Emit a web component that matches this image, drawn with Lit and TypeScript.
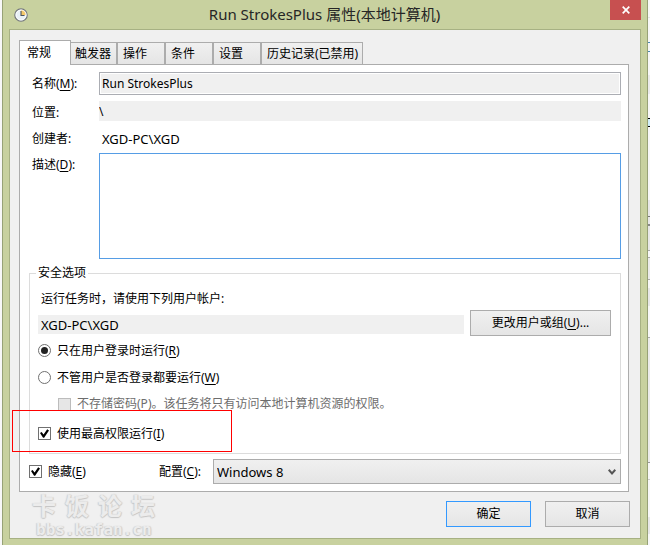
import { LitElement, html, css } from "lit";
import { customElement, state } from "lit/decorators.js";
import { classMap } from "lit/directives/class-map.js";
import { styleMap } from "lit/directives/style-map.js";

const TABS = [
  { name: "常规", size: "first" },
  { name: "触发器", size: "second" },
  { name: "操作", size: "mid" },
  { name: "条件", size: "mid" },
  { name: "设置", size: "mid" },
  { name: "历史记录(已禁用)", size: "long" },
];

// Edge of the page behind the dialog: height and colour of each band.
const BANDS: [number, string][] = [
  [17, "#f8f8f8"], [1, "#e4e4e4"], [24, "#f8f8f8"], [1, "#4a8bb0"],
  [8, "#f8f8f8"], [1, "#4a8bb0"], [23, "#f8f8f8"], [19, "#ebebeb"],
  [24, "#f8f8f8"], [1, "#000"], [7, "#d2f0fa"], [1, "#000"],
  [73, "#f8f8f8"], [16, "#e8e8e8"], [1, "#777"], [7, "#e8e8e8"],
  [2, "#888"], [24, "#e8e8e8"], [1, "#aaa"], [6, "#f8f8f8"],
  [1, "#aaa"], [21, "#ececec"], [1, "#aaa"], [8, "#f8f8f8"],
  [18, "#e8e8e8"], [31, "#f8f8f8"], [1, "#aaa"], [124, "#ececec"],
  [1, "#999"], [16, "#f8f8f8"], [1, "#ccc"], [37, "#f8f8f8"],
  [17, "#e8e8e8"],
];

@customElement("app-root")
export class AppRoot extends LitElement {
  @state() private tab = 0;

  static styles = css`
    :host {
      display: flex;
      min-height: 100vh;
      overflow: hidden;
      box-sizing: border-box;
      background: #f8f8f8;
      color: #000;
      font: 12px/16px "Noto Sans", "Noto Sans CJK SC", sans-serif;
    }
    *, *::before { box-sizing: border-box; }
    button, input, select, textarea { font: inherit; color: inherit; margin: 0; }
    u { text-decoration: underline; text-underline-offset: 2px; }
    .window {
      flex: 1;
      min-width: 0;
      margin: 0 0 0 2px;
      background: #c8d19f;
      border: solid #97a276;
      border-width: 0 1px;
      padding: 0 6px;
    }
    .titlebar {
      display: grid;
      grid-template-columns: 30px 1fr 31px;
      height: 29px;
    }
    .clock { width: 14px; height: 14px; margin: 8px 0 0 5px; }
    .title {
      margin: 0;
      text-align: center;
      font-size: 15px;
      line-height: 29px;
      font-weight: 400;
      color: #262626;
      white-space: nowrap;
    }
    .close {
      height: 20px;
      padding: 0;
      border: 0;
      background: #c75050;
      display: grid;
      place-items: center;
    }
    .body {
      background: #f0f0f0;
      border: 1px solid #a7b183;
      padding: 0 11px 0 9px;
    }
    .tabs { display: flex; align-items: flex-end; height: 34px; }
    .tab {
      height: 22px;
      padding: 0 0 0 5px;
      text-align: left;
      white-space: nowrap;
      background: linear-gradient(#f0f0f0, #e5e5e5);
      border: solid #acacac;
      border-width: 1px 1px 0 1px;
    }
    .first { width: 52px; padding-left: 7px; }
    .second { width: 46px; border-left: 0; padding-left: 4px; }
    .mid { width: 48px; }
    .long { width: 102px; }
    .active { height: 25px; margin-bottom: -1px; background: #fff; }
    .panel {
      background: #fff;
      border: 1px solid #acacac;
      padding: 7px 7px 7px 9px;
    }
    .form {
      display: grid;
      grid-template-columns: 67px 1fr;
      row-gap: 6px;
      padding-left: 3px;
      line-height: 16px;
    }
    .label { padding-top: 4px; }
    .plain { padding: 4px 0 0 3px; }
    .plain, .account .flat, .select { font-size: 13px; }
    .boxed {
      width: 100%;
      height: 23px;
      padding: 0 2px;
      border: 1px solid #abadb3;
      box-shadow: inset 0 0 0 1px #fff;
      background: #f0f0f0;
      outline: 0;
      border-radius: 0;
    }
    .flat {
      width: 100%;
      height: 20px;
      padding: 0;
      border: 0;
      background: #f0f0f0;
      outline: 0;
    }
    .area {
      display: block;
      width: 100%;
      height: 106px;
      border: 1px solid #569de5;
      background: #fff;
      resize: none;
      outline: 0;
    }
    .group {
      margin: 6px 0 0;
      min-width: 0;
      border: 1px solid #dcdcdc;
      padding: 8px 9px 6px 8px;
    }
    .legend { padding: 0 2px; margin-left: -2px; }
    .hint { margin: 0; padding-left: 3px; line-height: 20px; }
    .account { display: flex; gap: 6px; align-items: flex-end; margin: 1px 0; }
    .account .flat { flex: 1; min-width: 0; height: 19px; margin-bottom: 2px; padding-left: 3px; }
    .button {
      height: 26px;
      padding: 0;
      border: 1px solid #acacac;
      background: linear-gradient(#f0f0f0, #e5e5e5);
      text-align: center;
      white-space: nowrap;
    }
    .wide { width: 141px; }
    .normal { width: 85px; }
    .default { border-color: #3399ff; }
    .option { display: flex; align-items: center; gap: 6px; height: 27px; }
    .nested { height: 26px; padding-left: 20px; color: #6d6d6d; }
    .check, .radio {
      appearance: none;
      flex: none;
      width: 13px;
      height: 13px;
      border: 1px solid #707070;
      background: #fff;
      display: grid;
      place-items: center;
    }
    .check:checked::before {
      content: "";
      width: 9px;
      height: 9px;
      background: #000;
      clip-path: polygon(0 45%, 18% 34%, 40% 60%, 80% 4%, 100% 16%, 46% 98%, 34% 98%);
    }
    .check:disabled { border-color: #bcbcbc; background: #e6e6e6; }
    .radio { border-radius: 50%; }
    .radio:checked::before {
      content: "";
      width: 7px;
      height: 7px;
      border-radius: 50%;
      background: #222;
    }
    .marked { position: relative; margin-top: 3px; }
    .mark {
      position: absolute;
      left: -26px;
      top: -10px;
      width: 220px;
      bottom: -5px;
      border: 1px solid #f00;
      pointer-events: none;
    }
    .bottom {
      display: grid;
      grid-template-columns: 130px 54px 1fr;
      align-items: center;
      margin-top: 5px;
    }
    .bottom .option { height: 25px; }
    .picker { display: grid; align-items: center; }
    .select {
      grid-area: 1 / 1;
      appearance: none;
      width: 100%;
      height: 25px;
      padding: 0 20px 0 3px;
      border: 1px solid #acacac;
      border-radius: 0;
      background: linear-gradient(#f0f0f0, #e5e5e5);
    }
    .chevron { grid-area: 1 / 1; justify-self: end; margin-right: 5px; pointer-events: none; }
    .footer {
      display: flex;
      gap: 14px;
      align-items: flex-start;
      height: 46px;
      padding-top: 9px;
      margin-right: -1px;
    }
    .watermark {
      margin: -8px auto 0 13px;
      color: #ececec;
      text-shadow: 0 1px 1px #c4c4c4, 1px 0 1px #cecece, -1px 0 1px #d4d4d4;
    }
    .forum {
      display: flex;
      gap: 9px;
      font: 700 24px/28px "Liberation Sans", "Noto Sans CJK SC", sans-serif;
    }
    .site { display: block; padding-left: 4px; font: 700 16px/18px "DejaVu Sans Mono", monospace; }
    .behind { flex: none; width: 2px; }
  `;

  render() {
    return html`
      <main class="window">
        <header class="titlebar">
          <svg class="clock" viewBox="0 0 14 14" aria-hidden="true">
            <circle cx="7" cy="7" r="6.2" fill="#e8f0f6" stroke="#74787c" stroke-width="1.2" />
            <path d="M7 7V1.8A5.2 5.2 0 0 1 12.2 7Z" fill="#f5c869" />
            <circle cx="7" cy="7" r="5" fill="none" stroke="#fff" stroke-width=".8" />
            <path d="M7 3V7.5H10.5" fill="none" stroke="#4c555e" stroke-width="1.1" />
          </svg>
          <h1 class="title">Run StrokesPlus 属性(本地计算机)</h1>
          <button class="close" aria-label="关闭">
            <svg width="8" height="8" viewBox="0 0 8 8" aria-hidden="true">
              <path d="M.7 .7 7.3 7.3M7.3 .7 .7 7.3" stroke="#fff" stroke-width="1.7" />
            </svg>
          </button>
        </header>
        <div class="body">
          <nav class="tabs" role="tablist">
            ${TABS.map(
              (t, i) => html`<button
                role="tab"
                aria-selected=${i === this.tab}
                class=${classMap({ tab: true, [t.size]: true, active: i === this.tab })}
                @click=${() => (this.tab = i)}
              >${t.name}</button>`
            )}
          </nav>
          <section class="panel">
            <div class="form">
              <label class="label" for="name">名称(<u>M</u>):</label>
              <input class="boxed" id="name" readonly value="Run StrokesPlus" />
              <label class="label" for="place">位置:</label>
              <input class="flat" id="place" readonly value="\\" />
              <span class="label">创建者:</span>
              <span class="plain">XGD-PC\\XGD</span>
              <label class="label" for="about">描述(<u>D</u>):</label>
              <textarea class="area" id="about"></textarea>
            </div>
            <fieldset class="group">
              <legend class="legend">安全选项</legend>
              <p class="hint"><label for="account">运行任务时，请使用下列用户帐户:</label></p>
              <div class="account">
                <input class="flat" id="account" readonly value="XGD-PC\\XGD" />
                <button class="button wide">更改用户或组(<u>U</u>)...</button>
              </div>
              <label class="option">
                <input class="radio" type="radio" name="when" checked />
                <span>只在用户登录时运行(<u>R</u>)</span>
              </label>
              <label class="option">
                <input class="radio" type="radio" name="when" />
                <span>不管用户是否登录都要运行(<u>W</u>)</span>
              </label>
              <label class="option nested">
                <input class="check" type="checkbox" disabled />
                <span>不存储密码(<u>P</u>)。该任务将只有访问本地计算机资源的权限。</span>
              </label>
              <label class="option marked">
                <input class="check" type="checkbox" checked />
                <span>使用最高权限运行(<u>I</u>)</span>
                <span class="mark"></span>
              </label>
            </fieldset>
            <div class="bottom">
              <label class="option">
                <input class="check" type="checkbox" checked />
                <span>隐藏(<u>E</u>)</span>
              </label>
              <label for="config">配置(<u>C</u>):</label>
              <div class="picker">
                <select class="select" id="config"><option>Windows 8</option></select>
                <svg class="chevron" width="8" height="6" viewBox="0 0 8 6" aria-hidden="true">
                  <path d="M.7 .8 4 4.4 7.3 .8" fill="none" stroke="#555" stroke-width="2" />
                </svg>
              </div>
            </div>
          </section>
          <footer class="footer">
            <div class="watermark">
              <span class="forum"><span>卡</span><span>饭</span><span>论</span><span>坛</span></span>
              <span class="site">bbs.kafan.cn</span>
            </div>
            <button class="button normal default">确定</button>
            <button class="button normal">取消</button>
          </footer>
        </div>
      </main>
      <div class="behind" aria-hidden="true">
        ${BANDS.map(
          ([height, background]) => html`<div style=${styleMap({ height: `${height}px`, background })}></div>`
        )}
      </div>
    `;
  }
}
